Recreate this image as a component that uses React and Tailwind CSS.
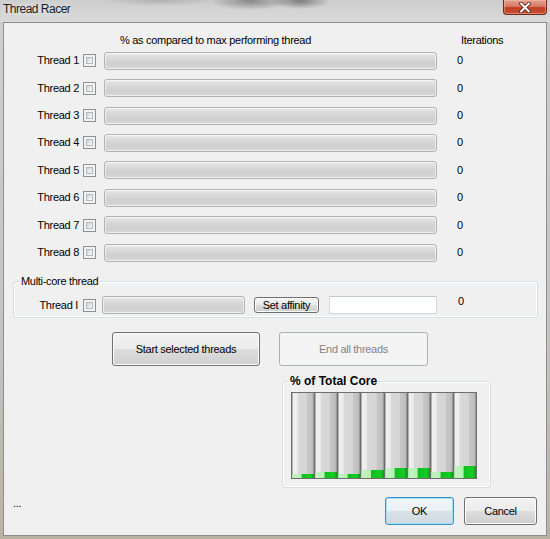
import React from "react";

function Check({ className = "" }) {
  return (
    <div className={`w-[13px] h-[13px] shrink-0 border border-[#8e8f8f] bg-[#f4f4f4] p-[2px] ${className}`}>
      <div className="w-full h-full border border-[#b4b8bd] bg-[linear-gradient(135deg,#d0d3d7_0%,#e6e7e9_50%,#fafafa_100%)]" />
    </div>
  );
}

function Bar({ className = "" }) {
  return (
    <div
      className={`h-[18px] shrink-0 rounded-[3px] border border-[#b2b2b2] bg-[linear-gradient(to_bottom,#ececec_0%,#dedede_20%,#d3d3d3_50%,#cfcfcf_75%,#dadada_100%)] shadow-[inset_0_0_0_1px_rgba(255,255,255,0.55)] ${className}`}
    />
  );
}

function ThreadRow({ n }) {
  return (
    <div className="flex h-[27.43px] items-center">
      <span className="w-[75px] text-right leading-[13px]">Thread {n}</span>
      <Check className="ml-[4px]" />
      <Bar className="ml-[8px] w-[333px]" />
      <span className="ml-[20px] leading-[13px]">0</span>
    </div>
  );
}

const cores = [4, 6, 4, 8, 10, 10, 6, 12];

const btn =
  "rounded-[3px] border border-[#707070] bg-[linear-gradient(to_bottom,#f2f2f2_0%,#ebebeb_50%,#dddddd_50%,#cfcfcf_100%)] shadow-[inset_0_0_0_1px_#fcfcfc] text-[11px]";

export default function App() {
  return (
    <div className="w-[550px] h-[539px] flex flex-col overflow-hidden bg-[linear-gradient(to_bottom,#cfcfcf_0%,#c4c4c4_60%,#b9b3a6_100%)] font-['Liberation_Sans',Arial,sans-serif] text-[11px] tracking-[-0.3px] text-black">
      {/* Title bar */}
      <div className="h-[22px] shrink-0 flex items-start bg-[radial-gradient(ellipse_40px_9px_at_250px_1px,rgba(80,80,80,0.55),transparent),radial-gradient(ellipse_30px_8px_at_300px_1px,rgba(70,70,70,0.6),transparent),radial-gradient(ellipse_60px_6px_at_160px_0px,rgba(120,120,120,0.35),transparent),linear-gradient(to_bottom,#cdcdcd,#dadada)]">
        <span className="pl-[3px] pt-[2px] text-[12px] tracking-[-0.5px] leading-[14px] text-[#1c1c1c] [text-shadow:0_0_6px_#f4f4f4]">
          Thread Racer
        </span>
        <div className="ml-auto mr-[3px] w-[44px] h-[15px] rounded-b-[4px] border border-t-0 border-[#6b2a1e] bg-[linear-gradient(to_bottom,#e2a090_0%,#d67a64_45%,#c13e24_55%,#c8502f_100%)] shadow-[inset_0_0_0_1px_rgba(255,200,190,0.45)] flex items-center justify-center">
          <svg width="14" height="11" viewBox="0 0 14 11">
            <path d="M3 1.5 L11 9.5 M11 1.5 L3 9.5" stroke="#4a1d14" strokeWidth="3.6" strokeLinecap="round" />
            <path d="M3 1.5 L11 9.5 M11 1.5 L3 9.5" stroke="#ffffff" strokeWidth="2" strokeLinecap="round" />
          </svg>
        </div>
      </div>

      {/* Client area */}
      <div className="ml-[3px] mr-[3px] mb-[3px] flex-1 border border-[#8d8d8d] bg-[#f0f0f0] flex flex-col">
        {/* Header */}
        <div className="mt-[10px] h-[14px] flex items-center">
          <span className="ml-[116px] w-[341px] leading-[13px]">% as compared to max performing thread</span>
          <span className="leading-[13px]">Iterations</span>
        </div>

        {/* Thread rows */}
        <div className="flex flex-col">
          {[1, 2, 3, 4, 5, 6, 7, 8].map((n) => (
            <ThreadRow key={n} n={n} />
          ))}
        </div>

        {/* Multi-core group */}
        <fieldset className="mt-[9px] ml-[9px] w-[525px] rounded-[3px] border border-[#d5dfe5] shadow-[inset_0_0_0_1px_#ffffff] pb-[3px]">
          <legend className="ml-[6px] px-[1px] leading-[13px]">Multi-core thread</legend>
          <div className="mt-[8px] flex h-[18px] items-center">
            <span className="w-[64px] text-right leading-[13px]">Thread I</span>
            <Check className="ml-[5px]" />
            <Bar className="ml-[6px] w-[143px]" />
            <button className={`ml-[9px] w-[65px] h-[16px] leading-[12px] ${btn}`}>Set affinity</button>
            <div className="ml-[10px] w-[108px] h-[18px] border border-[#d2d7dd] border-t-[#c3c8ce] bg-white" />
            <span className="ml-[21px] self-start -mt-[1px] leading-[13px]">0</span>
          </div>
        </fieldset>

        {/* Start / End buttons */}
        <div className="mt-[14px] flex">
          <button className={`ml-[108px] w-[148px] h-[34px] ${btn}`}>Start selected threads</button>
          <button className="ml-[19px] w-[149px] h-[34px] rounded-[3px] border border-[#adb2b5] bg-[#f4f4f4] text-[#838383] text-[11px]">
            End all threads
          </button>
        </div>

        {/* % of Total Core */}
        <fieldset className="mt-[8px] ml-[278px] w-[209px] rounded-[3px] border border-[#d5dfe5] shadow-[inset_0_0_0_1px_#ffffff] pb-[8px]">
          <legend className="ml-[6px] px-[1px] font-bold text-[12px] tracking-[0px] leading-[14px]">% of Total Core</legend>
          <div className="mt-[4px] ml-[8px] w-[186px] h-[87px] flex gap-px p-px bg-[#6e6e6e]">
            {cores.map((h, i) => (
              <div
                key={i}
                className="flex-1 flex flex-col justify-end bg-[linear-gradient(to_right,#8c8c8c_0%,#f0f0f0_6%,#ececec_24%,#d8d8d8_28%,#d5d5d5_66%,#c6c6c6_70%,#c0c0c0_92%,#8c8c8c_100%)]"
              >
                <div
                  className="w-full bg-[linear-gradient(to_right,#a6dca6_0%,#c2f5c2_8%,#b4f0b4_42%,#0fbf1f_45%,#14cc24_85%,#0a9a16_100%)]"
                  style={{ height: h }}
                />
              </div>
            ))}
          </div>
        </fieldset>

        {/* Bottom row */}
        <div className="mt-[9px] flex h-[28px] items-start">
          <span className="ml-[9px] leading-[13px]">...</span>
          <button className="ml-auto w-[69px] h-[28px] rounded-[3px] border border-[#3c8fd0] bg-[linear-gradient(to_bottom,#f1f6f9_0%,#e9f0f4_50%,#d8e2e8_50%,#cfd9df_100%)] shadow-[inset_0_0_0_1px_#a6e1fb] text-[11px]">
            OK
          </button>
          <button className={`ml-[10px] mr-[9px] w-[73px] h-[28px] ${btn}`}>Cancel</button>
        </div>
      </div>
    </div>
  );
}
